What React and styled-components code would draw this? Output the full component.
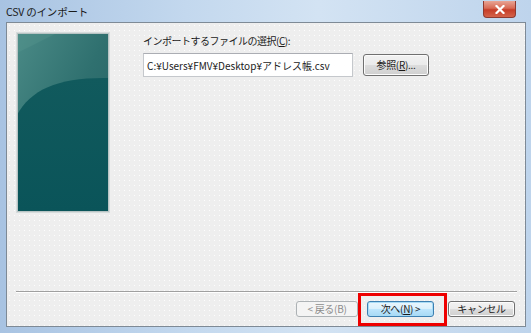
import React from "react";
import styled, { createGlobalStyle } from "styled-components";

const GlobalStyle = createGlobalStyle`
    html, body {
        margin: 0;
        padding: 0;
        background: #ffffff;
    }
    body {
        font-family: "Noto Sans CJK JP", "Liberation Sans", sans-serif;
        font-size: 10px;
        color: #1a1a1a;
    }
`;

const Frame = styled.div`
    width: 531px;
    height: 333px;
    box-sizing: border-box;
    display: flex;
    flex-direction: column;
    padding: 0 5px 6px 6px;
    background: linear-gradient(90deg, #a8c3e2 0%, #c3d8ee 35%, #d3e3f3 60%, #bed4ec 100%);
`;

const TitleBar = styled.div`
    height: 22px;
    display: flex;
    align-items: center;
    justify-content: space-between;
    flex-shrink: 0;
`;

const TitleText = styled.span`
    font-size: 10.5px;
    color: #1b1b1b;
    line-height: 1;
    padding-top: 2px;
    letter-spacing: -0.2px;
`;

const CloseButton = styled.div`
    width: 33px;
    height: 17px;
    margin-top: -3px;
    margin-right: 10px;
    box-sizing: border-box;
    border: 1px solid #8e3a30;
    border-top: none;
    border-radius: 0 0 4px 4px;
    background: linear-gradient(180deg, #e8a595 0%, #d86a55 45%, #c63d28 55%, #d4634a 100%);
    display: flex;
    align-items: center;
    justify-content: center;
`;

const Client = styled.div`
    flex: 1;
    display: flex;
    flex-direction: column;
    border: 1px solid #7e8a96;
    background-color: #eeeeee;
    background-image: radial-gradient(circle, rgba(255, 255, 255, 0.9) 0.6px, transparent 0.9px);
    background-size: 5px 5px;
    padding: 9px 8px 0 9px;
`;

const Body = styled.div`
    display: flex;
    gap: 33px;
    flex: 1;
`;

const SidePicture = styled.div`
    width: 94px;
    height: 181px;
    box-sizing: border-box;
    border: 1px solid #d6dcdc;
    outline: 1px solid #b8c4c4;
    outline-offset: -2px;
    flex-shrink: 0;
    display: flex;
`;

const Form = styled.div`
    display: flex;
    flex-direction: column;
    padding-top: 2px;
`;

const Label = styled.label`
    font-size: 10px;
    line-height: 13px;
    letter-spacing: -0.5px;
    color: #1a1a1a;
    margin-bottom: 6px;
`;

const Row = styled.div`
    display: flex;
    align-items: center;
    gap: 10px;
`;

const PathInput = styled.div`
    width: 210px;
    height: 24px;
    box-sizing: border-box;
    background: #ffffff;
    border: 1px solid #c5c8cc;
    border-top-color: #abadb3;
    padding: 0 3px;
    display: flex;
    align-items: center;
    font-size: 10px;
    color: #1a1a1a;
    white-space: nowrap;
`;

const Button = styled.button`
    width: ${(p) => p.$w}px;
    height: ${(p) => p.$h || 16}px;
    box-sizing: border-box;
    border: 1px solid ${(p) => (p.$default ? "#3c7fb1" : "#707070")};
    border-radius: 3px;
    background: ${(p) =>
        p.$default
            ? "linear-gradient(180deg, #eaf6fd 0%, #d9f0fc 50%, #bee6fd 50%, #a7d9f5 100%)"
            : "linear-gradient(180deg, #f2f2f2 0%, #ebebeb 50%, #dddddd 50%, #cfcfcf 100%)"};
    box-shadow: inset 0 0 0 1px ${(p) => (p.$default ? "#a9dcf6" : "#fcfcfc")};
    font-family: "Noto Sans CJK JP", "Liberation Sans", sans-serif;
    font-size: 10px;
    letter-spacing: -0.3px;
    line-height: 1;
    color: ${(p) => (p.$disabled ? "#8d8d8d" : "#1a1a1a")};
    padding: 0;
    display: flex;
    align-items: center;
    justify-content: center;
    ${(p) =>
        p.$disabled &&
        `
        border-color: #adb2b5;
        background: #f4f4f4;
        box-shadow: none;
    `}
`;

const Separator = styled.div`
    height: 1px;
    background: #a0a0a0;
    border-bottom: 1px solid #ffffff;
`;

const Footer = styled.div`
    display: flex;
    justify-content: flex-end;
    align-items: center;
    height: 32px;
    padding-right: 2px;
    padding-bottom: 1px;
`;

const Highlight = styled.div`
    position: relative;
    display: flex;
    margin: 0 14px 0 9px;

    &::after {
        content: "";
        position: absolute;
        left: -9px;
        right: -13px;
        top: -8px;
        bottom: -9px;
        border: 3px solid #ee0000;
        pointer-events: none;
    }
`;

const Mnemonic = styled.span`
    text-decoration: underline;
`;

const TealArt = () => (
    <svg width="92" height="179" viewBox="0 0 92 179">
        <defs>
            <linearGradient id="top" x1="0" y1="0" x2="1" y2="1">
                <stop offset="0" stopColor="#4a8a86" />
                <stop offset="0.5" stopColor="#2f706f" />
                <stop offset="1" stopColor="#245f62" />
            </linearGradient>
            <linearGradient id="low" x1="0" y1="0" x2="0" y2="1">
                <stop offset="0" stopColor="#115a5d" />
                <stop offset="1" stopColor="#0a5459" />
            </linearGradient>
        </defs>
        <rect width="92" height="179" fill="url(#top)" />
        <path d="M0 20 L0 0 L40 0 Z" fill="#5a9890" opacity="0.35" />
        <path d="M0 82 C14 56 42 44 92 45 L92 179 L0 179 Z" fill="url(#low)" />
    </svg>
);

const CloseGlyph = () => (
    <svg width="10" height="9" viewBox="0 0 10 9">
        <path d="M1.5 1 L8.5 8 M8.5 1 L1.5 8" stroke="#ffffff" strokeWidth="2.2" strokeLinecap="square" />
    </svg>
);

export default function App() {
    return (
        <>
            <GlobalStyle />
            <Frame>
                <TitleBar>
                    <TitleText>CSV のインポート</TitleText>
                    <CloseButton>
                        <CloseGlyph />
                    </CloseButton>
                </TitleBar>
                <Client>
                    <Body>
                        <SidePicture>
                            <TealArt />
                        </SidePicture>
                        <Form>
                            <Label>
                                インポートするファイルの選択(<Mnemonic>C</Mnemonic>):
                            </Label>
                            <Row>
                                <PathInput>C:¥Users¥FMV¥Desktop¥アドレス帳.csv</PathInput>
                                <Button $w={66} $h={22}>
                                    参照(<Mnemonic>R</Mnemonic>)...
                                </Button>
                            </Row>
                        </Form>
                    </Body>
                    <Separator />
                    <Footer>
                        <Button $w={62} $disabled>
                            &lt; 戻る(B)
                        </Button>
                        <Highlight>
                            <Button $w={67} $default>
                                次へ(<Mnemonic>N</Mnemonic>) &gt;
                            </Button>
                        </Highlight>
                        <Button $w={67}>キャンセル</Button>
                    </Footer>
                </Client>
            </Frame>
        </>
    );
}
